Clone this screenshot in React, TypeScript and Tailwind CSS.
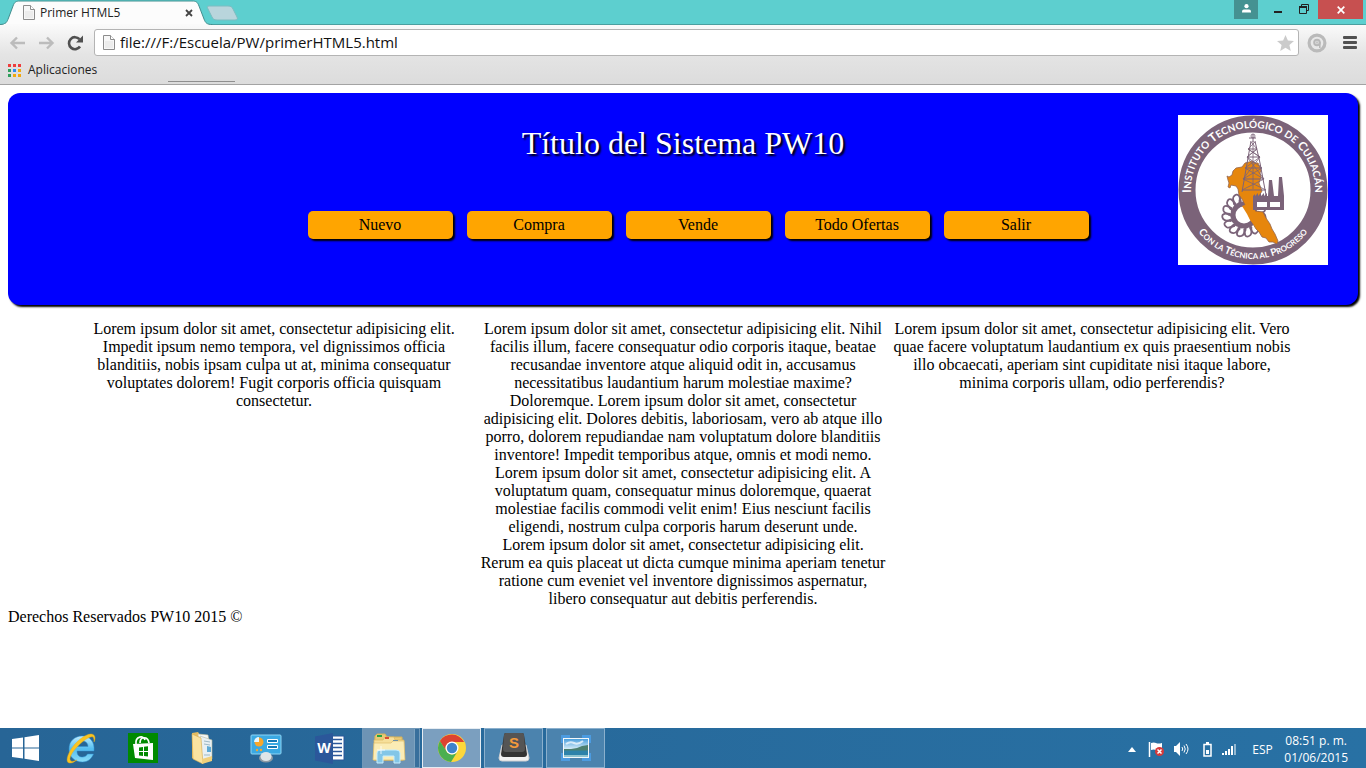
import React from 'react';

const ui = "font-['Open_Sans','Noto_Sans',sans-serif]";
const serif = "font-['Liberation_Serif','Times_New_Roman',serif]";

const PageIcon = () => (
  <svg width="12" height="15" viewBox="0 0 12 15" className="shrink-0" aria-hidden="true">
    <path d="M.5.5h7l4 4v10H.5z" fill="#f7f7f7" stroke="#8c8c8c" />
    <path d="M7.5.5v4h4" fill="#fff" stroke="#8c8c8c" />
    <path d="M2 6h8v7H2z" fill="#ececec" />
  </svg>
);

function TitleBar() {
  return (
    <div className="flex h-[25px] items-start justify-between bg-[#5dcfcf] shadow-[inset_0_-1px_0_#4a9f9f]">
      <div className="grid h-[25px] grid-cols-[240px]">
        <svg className="col-start-1 row-start-1" width="240" height="25" viewBox="0 0 240 25" aria-hidden="true">
          <path d="M0 24.5C6 24.5 7 22 8.500 18L13 6C14.500 2 16 1 20 1H192C196 1 197.500 2 199 6L204 19C205.500 23 207 24.500 212 24.500V26H0Z" fill="#fcfcfc" stroke="#438f8f" />
          <path d="M4 24.500h203" stroke="#fafafa" />
          <path d="M209 6h19c3 0 4 1 5 3l4 8c1 2 0 3-2 3h-18c-3 0-4-1-5-3l-4-8c-1-2-1-3 1-3z" fill="#b9d5dc" stroke="#7dbcc0" />
        </svg>
        <div className="col-start-1 row-start-1 flex h-[25px] items-center pr-[43px] pl-[23px]">
          <PageIcon />
          <span className="ml-[5px] flex-1 text-[12px] leading-4 text-[#222]">Primer HTML5</span>
          <button aria-label="Cerrar pestaña" className="grid h-4 w-4 place-items-center">
            <svg width="8" height="8" viewBox="0 0 8 8"><path d="M1 1l6 6M7 1L1 7" stroke="#444" strokeWidth="1.800" /></svg>
          </button>
        </div>
      </div>
      <div className="flex h-[19px] pr-[3px]">
        <button aria-label="Usuario" className="grid w-6 justify-center bg-[#459191] pt-1">
          <svg width="9" height="9" viewBox="0 0 9 9" fill="#fff"><circle cx="4.500" cy="2.200" r="2.100" /><path d="M0 8.500V7.500q0-2 2-2h5q2 0 2 2v1z" /></svg>
        </button>
        <button aria-label="Minimizar" className="grid w-10 place-items-center">
          <svg width="8" height="10" viewBox="0 0 8 10"><path d="M0 6h8v2H0z" fill="#222" /></svg>
        </button>
        <button aria-label="Restaurar" className="grid w-5 justify-start pt-1 pl-px">
          <svg width="10" height="10" viewBox="0 0 10 10" fill="none" stroke="#222"><path d="M2.500 2V.5h7v6H8M.5 3v6.500h7V3" /><path d="M0 3h8" strokeWidth="2" /></svg>
        </button>
        <button aria-label="Cerrar" className="grid w-[45px] place-items-center bg-[#c75050]">
          <svg width="8" height="8" viewBox="0 0 8 8"><path d="M.7.700l6.600 6.600M7.300.700L.7 7.300" stroke="#fff" strokeWidth="1.700" /></svg>
        </button>
      </div>
    </div>
  );
}

const appColors = ['#ee3d3d', '#ee3d3d', '#ee3d3d', '#2f9e5c', '#2f8cf0', '#f0a810', '#2f9e5c', '#f0a810', '#f0a810'];

function Toolbar() {
  return (
    <div className="flex h-[60px] flex-col border-b border-[#a3a3a3] bg-linear-to-b from-[#fafafa] via-[#e4e4e4] to-[#dcdcdc]">
      <div className="flex h-[35px] items-center px-[9px]">
        <button aria-label="Atrás">
          <svg width="17" height="14" viewBox="0 0 17 14" fill="none" stroke="#bcbcbc" strokeWidth="2.400"><path d="M8 1.500L2.500 7l5.500 5.500M2 7h14" /></svg>
        </button>
        <button aria-label="Adelante" className="ml-3">
          <svg width="17" height="14" viewBox="0 0 17 14" fill="none" stroke="#bcbcbc" strokeWidth="2.400"><path d="M9 1.500l5.500 5.500L9 12.500M15 7H1" /></svg>
        </button>
        <button aria-label="Recargar" className="ml-3">
          <svg width="17" height="16" viewBox="0 0 17 16"><path d="M13 11.500A6 6 0 1 1 12.500 4.200" fill="none" stroke="#505050" strokeWidth="2.600" /><path d="M16 .5v7H9z" fill="#505050" /></svg>
        </button>
        <label className="ml-2.5 flex h-[27px] flex-1 items-center rounded-[3px] border border-[#b4b4b4] bg-white pr-1 pl-2">
          <PageIcon />
          <input
            aria-label="Dirección"
            defaultValue="file:///F:/Escuela/PW/primerHTML5.html"
            className="ml-[5px] min-w-0 flex-1 bg-transparent pb-0.5 text-[15px] leading-5 text-[#111] outline-none"
          />
          <svg width="17" height="16" viewBox="0 0 17 16" fill="#cbcbcb" aria-hidden="true"><path d="M8.500 0l2.400 5.400 6.100.6-4.600 4 1.400 6-5.300-3.200L3.200 16l1.400-6L0 6l6.100-.6z" /></svg>
        </label>
        <button aria-label="Extensión" className="ml-2">
          <svg width="20" height="20" viewBox="0 0 20 20" fill="none"><circle cx="10" cy="10" r="7.900" fill="#e8e8e8" stroke="#bababa" strokeWidth="3.200" /><circle cx="10" cy="9.500" r="2.800" stroke="#b8b8b8" strokeWidth="2" /><circle cx="10" cy="9.500" r="1.200" fill="#c4c4c4" /><path d="M12.800 9v6" stroke="#b8b8b8" strokeWidth="1.600" /></svg>
        </button>
        <button aria-label="Menú" className="ml-4">
          <svg width="14" height="13" viewBox="0 0 14 13" fill="#505050"><rect width="14" height="3" rx="1" /><rect y="5" width="14" height="3" rx="1" /><rect y="10" width="14" height="3" rx="1" /></svg>
        </button>
      </div>
      <div className="flex flex-1 items-start pl-2">
        <a href="#aplicaciones" className="flex items-center gap-[7px] pt-0.5 text-[12px] leading-4 text-[#222]">
          <svg width="13" height="13" viewBox="0 0 13 13" aria-hidden="true">
            {appColors.map((c, i) => <rect key={i} x={(i % 3) * 5} y={Math.floor(i / 3) * 5} width="3" height="3" fill={c} />)}
          </svg>
          Aplicaciones
        </a>
        <div className="mb-0.5 ml-[71px] h-px w-[67px] self-end bg-[#8f8f8f]" />
      </div>
    </div>
  );
}

function Emblem() {
  const teeth = Array.from({ length: 15 }, (_, i) => i * 24);
  return (
    <svg width="150" height="150" viewBox="0 0 150 150" className="block bg-white" role="img" aria-label="Instituto Tecnológico de Culiacán">
      <defs>
        <path id="arcTop" d="M16 94A62 62 0 1 1 134 94" />
        <path id="arcBottom" d="M10 98A69 69 0 0 0 140 98" />
      </defs>
      <circle cx="75" cy="75" r="66" fill="#fff" stroke="#7b6379" strokeWidth="17" />
      <g fill="#fff" className="font-['Lato',sans-serif] font-bold">
        <text fontSize="12" textAnchor="middle">
          <textPath href="#arcTop" startOffset="50%">I<tspan fontSize="10">NSTITUTO</tspan> T<tspan fontSize="10">ECNOLÓGICO</tspan> <tspan fontSize="10">DE</tspan> C<tspan fontSize="10">ULIACÁN</tspan></textPath>
        </text>
        <text fontSize="10" textAnchor="middle">
          <textPath href="#arcBottom" startOffset="50%">C<tspan fontSize="8">ON LA</tspan> T<tspan fontSize="8">ÉCNICA AL</tspan> P<tspan fontSize="8">ROGRESO</tspan></textPath>
        </text>
      </g>
      <circle cx="66" cy="100" r="12.500" fill="#fff" stroke="#7b6379" strokeWidth="8" />
      {teeth.map((a) => (
        <path key={a} transform={`rotate(${a} 66 100)`} d="M63 87q-2-6 1-8q4-2 5 1q1 3-2 6" fill="#fff" stroke="#7b6379" strokeWidth="1.800" />
      ))}
      <path d="M49 61l2 1 3-2 1-4 3-3 6-1 3-4 4-1 3-1 3 2 3 0 2 4 1 3-1 3 1 4-2 6 3 8-6 10-1 10 8 1 3 6 4 6 2 5 3 5 3 7-1 3-4-2-4 0-3-4-4-1-3-5-3-3-3-5-3-6-4-5-1-8-3-6-3-4-1-6-2-3-5-1-1 3-2-1 1-4-1-3z" fill="#e6860d" stroke="#96664d" strokeWidth=".8" />
      <circle cx="67" cy="100" r="7.500" fill="#fff" />
      <path d="M64 91l5 8 3 6 5 6 6-3-6-12-4-8z" fill="#e6860d" />
      <g fill="none" stroke="#7b6379">
        <path strokeWidth="1" d="M73 26L64 77M77 26l5 22 6 32M75 19v8M71 23h7M70 34h9M69 42h13M67 53h17M65 64h21M64 75h24" />
        <path strokeWidth=".8" d="M73 27l6 7-10 8 15 11-19 11 23 11M77 27l-7 7 12 8-15 11 19 11-22 11M70 34l12 8M79 34l-10 8M75 26v48M69 42l17 22M82 42L65 64" />
        <circle cx="75" cy="21" r="2" strokeWidth=".8" />
      </g>
      <path d="M75 84v-3l2-2v2l3-3v3l3-3v3l3-3v3l3-3v3h1l1-16h3l2 16h4l1-19h3l2 19v14H75z" fill="#7b6379" />
      <path d="M79 87h10v5H79zM92 87h10v5H92z" fill="#fff" />
    </svg>
  );
}

const links = ['Nuevo', 'Compra', 'Vende', 'Todo Ofertas', 'Salir'];

function Page() {
  return (
    <main className={`flex-1 bg-white p-2 text-[16px] leading-[18px] text-black ${serif}`}>
      <header className="grid min-h-[212px] grid-cols-[180px_1fr_180px] rounded-xl bg-[#0000ff] shadow-[2px_2px_2px_#000]">
        <div className="col-start-2">
          <h1 className="pt-8 text-center text-[32px] leading-9 text-white [text-shadow:2px_2px_2px_#000]">Título del Sistema PW10</h1>
          <nav className="mt-[50px] flex justify-center gap-3.5 pl-[30px]">
            {links.map((l) => (
              <a key={l} href="#menu" className="h-7 w-[145px] rounded-[5px] bg-[#ffa500] pt-[5px] text-center shadow-[2px_2px_2px_#000]">{l}</a>
            ))}
          </nav>
        </div>
        <div className="pt-[22px]"><Emblem /></div>
      </header>
      <section className="grid grid-cols-[30%_30%_30%] justify-center gap-1 pt-[15px] text-center">
        <p>Lorem ipsum dolor sit amet, consectetur adipisicing elit. Impedit ipsum nemo tempora, vel dignissimos officia blanditiis, nobis ipsam culpa ut at, minima consequatur voluptates dolorem! Fugit corporis officia quisquam consectetur.</p>
        <div>
          <p>Lorem ipsum dolor sit amet, consectetur adipisicing elit. Nihil facilis illum, facere consequatur odio corporis itaque, beatae recusandae inventore atque aliquid odit in, accusamus necessitatibus laudantium harum molestiae maxime? Doloremque. Lorem ipsum dolor sit amet, consectetur adipisicing elit. Dolores debitis, laboriosam, vero ab atque illo porro, dolorem repudiandae nam voluptatum dolore blanditiis inventore! Impedit temporibus atque, omnis et modi nemo. Lorem ipsum dolor sit amet, consectetur adipisicing elit. A voluptatum quam, consequatur minus doloremque, quaerat molestiae facilis commodi velit enim! Eius nesciunt facilis eligendi, nostrum culpa corporis harum deserunt unde.</p>
          <p>Lorem ipsum dolor sit amet, consectetur adipisicing elit. Rerum ea quis placeat ut dicta cumque minima aperiam tenetur ratione cum eveniet vel inventore dignissimos aspernatur, libero consequatur aut debitis perferendis.</p>
        </div>
        <p>Lorem ipsum dolor sit amet, consectetur adipisicing elit. Vero quae facere voluptatum laudantium ex quis praesentium nobis illo obcaecati, aperiam sint cupiditate nisi itaque labore, minima corporis ullam, odio perferendis?</p>
      </section>
      <footer>Derechos Reservados PW10 2015 ©</footer>
    </main>
  );
}

const WindowsLogo = () => (
  <svg width="27" height="26" viewBox="0 0 27 26" fill="#fff"><path d="M0 4l11-1.500v10H0zM12.500 2.200L27 0v12.500H12.500zM0 13.500h11v10L0 22zM12.500 13.500H27V26l-14.500-2.200z" /></svg>
);

const IeLogo = () => (
  <svg width="30" height="31" viewBox="0 0 30 31">
    <defs><linearGradient id="ie" x2="0" y2="1"><stop stopColor="#c0edff" /><stop offset=".5" stopColor="#53bdf0" /><stop offset="1" stopColor="#8adcf8" /></linearGradient></defs>
    <path fill="url(#ie)" stroke="#2c8fd0" strokeWidth=".5" fillRule="evenodd" d="M16 3c8 0 13 6 12 15H11c0 4 2 6 5.500 6 2 0 4-1 5-3h6c-2 5-6 8-11 8C9 29 3 24 3 16S9 3 16 3zM11 13.500h11c0-3-2-5.500-5.500-5.500S11 10.500 11 13.500z" />
    <path d="M28 9c2-4 1-8-3-8C19 1 9 9 4 18c-4 7-4 13 1 12 2 0 4-2 6-3-3 1-5 2-6 1-3-2 1-9 7-15C18 7 24 3 27 4c1 1 1 3 1 5z" fill="#fac421" stroke="#e6a815" strokeWidth=".4" />
  </svg>
);

const StoreLogo = () => (
  <svg width="30" height="30" viewBox="0 0 30 30">
    <path fill="#008a00" d="M0 0h30v30H0z" />
    <path d="M8 11c-1-8 8-9 9-4M12 10c0-7 8-7 9 0" fill="none" stroke="#fff" strokeWidth="1.700" />
    <path d="M5 11l20-1v17L7 25z" fill="#fff" />
    <path d="M11 14.500l4-.5v4h-4zM16 13.800l4-.6v4.800h-4zM11 19h4v4l-4-.5zM16 19h4v4.500l-4-.6z" fill="#008a00" />
  </svg>
);

const FolderLogo = () => (
  <svg width="26" height="32" viewBox="0 0 26 32">
    <path d="M2 1l6-1 2 3v27l-8-4z" fill="#e5bd62" /><path d="M8 2l10 1 3 22-10 4z" fill="#f5f6f4" stroke="#cfc7a3" strokeWidth=".6" />
    <path d="M10 4l12 4v19l-10 1z" fill="#e8f0f3" stroke="#b6b8a0" strokeWidth=".6" /><path d="M14 9l6 1M14 12l6 1M14 23h6" stroke="#9fb9c5" /><path d="M17 14l4 1v5h-4z" fill="#5eaad5" />
    <path d="M2 2l9 4 2 26-10-5z" fill="#fae3a0" stroke="#d6ab4d" strokeWidth=".6" /><path d="M12 27l10-3v5l-10 3z" fill="#f0cf7b" />
  </svg>
);

const PanelLogo = () => (
  <svg width="32" height="30" viewBox="0 0 32 30">
    <rect x="1" y="2" width="30" height="19" rx="1" fill="#3ba9e2" stroke="#8ed5f5" />
    <circle cx="9" cy="9" r="4.500" fill="#f9a72b" /><path d="M9 9V4a5 5 0 0 0-5 5z" fill="#e6f6ff" />
    <path d="M17.500 6.500h10v3h-10zM17.500 12.500h10v3h-10z" fill="#157ab8" stroke="#fff" /><circle cx="7" cy="17" r="1.200" fill="#f9a72b" /><circle cx="11" cy="17" r="1.200" fill="#f9a72b" />
    <ellipse cx="16" cy="25" rx="7" ry="4.500" fill="#8e9aa3" /><ellipse cx="16" cy="23.500" rx="5.500" ry="4.500" fill="#dfe5e8" />
  </svg>
);

const WordLogo = () => (
  <svg width="30" height="31" viewBox="0 0 30 31">
    <path d="M17 3h12v24H17z" fill="#fff" stroke="#2b579a" /><path d="M18 6.500h9M18 10.500h9M18 14.500h9M18 18.500h9M18 22.500h9" stroke="#2b579a" strokeWidth="1.500" />
    <path d="M0 3.500L18 0v31L0 27.500z" fill="#2b579a" /><text x="9" y="20" fontSize="14" fontWeight="700" textAnchor="middle" fill="#fff" className="font-['Open_Sans',sans-serif]">W</text>
  </svg>
);

const ExplorerLogo = () => (
  <svg width="34" height="31" viewBox="0 0 34 31">
    <path d="M3 3l2-2h8l2 3h15l1 23H2z" fill="#e9c976" stroke="#d6b257" /><path d="M5 2h5v2H5z" fill="#25a342" />
    <path d="M2 7h9l2-3h9l1 3h9v20H2z" fill="#f6df9a" stroke="#d9b660" strokeWidth=".7" /><path d="M13 4h4v2h-4z" fill="#dc4b30" /><path d="M21 7h5v2h-5z" fill="#3478c6" />
    <path d="M2 10h17l2-2h11l1 19H1z" fill="#fbecb5" stroke="#dfbf6c" strokeWidth=".7" />
    <path d="M5 30V20q0-3 4-3h15q4 0 4 3v10h-6v-7H11v7z" fill="#83c6e7" stroke="#c8eefd" />
    <path d="M9 13v8M5 17h8" stroke="#fff" opacity=".8" />
  </svg>
);

const ChromeLogo = () => (
  <svg width="30" height="30" viewBox="0 0 30 30">
    <circle cx="15" cy="15" r="14" fill="#fdd73b" />
    <path d="M2.900 8A14 14 0 0 1 27.100 9H15a6.500 6.500 0 0 0-6 9z" fill="#dd4330" />
    <path d="M2.900 8A14 14 0 0 0 14 29l6.500-10.500A6.500 6.500 0 0 1 9 17.500z" fill="#4caf50" />
    <circle cx="15" cy="15" r="6.500" fill="#fff" /><circle cx="15" cy="15" r="5.200" fill="#3f83cc" />
  </svg>
);

const SublimeLogo = () => (
  <svg width="32" height="30" viewBox="0 0 32 30">
    <path d="M4 12h24l3 13q0 3-3 3H4q-3 0-3-3z" fill="#f2f2f2" stroke="#d0d0d0" />
    <path d="M6 2q0-2 2-2h16q2 0 2 2l3 19q0 3-3 3H6q-3 0-3-3z" fill="#333" /><path d="M6 2q0-2 2-2h16q2 0 2 2l1 14q0 3-3 3H8q-3 0-3-3z" fill="#555" />
    <text x="16" y="15" fontSize="15" fontWeight="700" textAnchor="middle" fill="#f59a3b" className="font-['Liberation_Sans',sans-serif]">S</text>
  </svg>
);

const PhotoLogo = () => (
  <svg width="30" height="26" viewBox="0 0 30 26">
    <defs><linearGradient id="sky" x2="0" y2="1"><stop stopColor="#4a9fdc" /><stop offset="1" stopColor="#e3f4fb" /></linearGradient></defs>
    <path d="M1.500 8V1.500H9M21 1.500h7.500V8M28.500 18v6.500H21M9 24.500H1.500V18" fill="none" stroke="#4c9be0" strokeWidth="3" />
    <path d="M2 3h26v20H2z" fill="#f4f8fa" /><path d="M3 4h24v11H3z" fill="url(#sky)" /><path d="M3 14h7l6-1 5-2 6-1v6H3z" fill="#4c8070" /><path d="M3 15.500h24V22H3z" fill="#2d82aa" /><path d="M3 20h24v2H3z" fill="#8fc3cf" />
    <path d="M5 9q4-3 8-1t9-2" fill="none" stroke="#fff" strokeWidth="2" opacity=".7" />
  </svg>
);

const pinned = [
  { n: 'Inicio', I: WindowsLogo, c: 'w-[50px]' },
  { n: 'Internet Explorer', I: IeLogo, c: 'w-[62px]' },
  { n: 'Tienda', I: StoreLogo, c: 'w-[62px]' },
  { n: 'Documentos', I: FolderLogo, c: 'w-[58px]' },
  { n: 'Panel de control', I: PanelLogo, c: 'w-[68px]' },
  { n: 'Word', I: WordLogo, c: 'w-[60px]' },
];

const openApps = [
  { n: 'Google Chrome', I: ChromeLogo, c: 'w-[59px] border-white/80 bg-[#7b9fbf]' },
  { n: 'Sublime Text', I: SublimeLogo, c: 'w-[59px] border-[#8bb0cd] bg-[#4b83ae]' },
  { n: 'Fotos', I: PhotoLogo, c: 'w-[59px] border-[#8bb0cd] bg-[#4b83ae]' },
];

function Taskbar() {
  return (
    <div className="flex h-10 items-stretch justify-between bg-linear-to-r from-[#276596] to-[#2871a4] text-white">
      <div className="flex">
        {pinned.map(({ n, I, c }) => <button key={n} aria-label={n} className={`grid place-items-center ${c}`}><I /></button>)}
        <div className="ml-0.5 flex border border-[#7198b8] bg-[#6d94b5]">
          <button aria-label="Explorador" className="grid w-[51px] place-items-center"><ExplorerLogo /></button>
          <div className="w-[5px] border-l border-[#7ea3c0] bg-[#386f9c]" />
        </div>
        <div className="ml-[2px] flex gap-[3px]">
          {openApps.map(({ n, I, c }) => <button key={n} aria-label={n} className={`grid place-items-center border ${c}`}><I /></button>)}
        </div>
      </div>
      <div className="flex items-center pr-[18px] pt-0.5 text-[12px] leading-[17px]">
        <button aria-label="Mostrar iconos ocultos"><svg width="8" height="5" viewBox="0 0 8 5"><path d="M4 0l4 5H0z" fill="#fff" /></svg></button>
        <svg className="ml-3" width="17" height="16" viewBox="0 0 17 16" aria-hidden="true"><path d="M1.500 1v15" stroke="#fff" strokeWidth="1.500" /><path d="M3 2q3-1 5 0t6 0v7H8q-2-1-5 0z" fill="#fff" /><circle cx="11.500" cy="10.500" r="4.500" fill="#d63a3a" /><path d="M9.500 8.500l4 4M13.500 8.500l-4 4" stroke="#fff" strokeWidth="1.500" /></svg>
        <svg className="ml-2" width="16" height="14" viewBox="0 0 16 14" aria-hidden="true"><path d="M1 4h2l4-4v14l-4-4H1z" fill="#fff" /><path d="M9 5q1.500 2 0 4M11 3.500q2.500 3.500 0 7M13 2q4 5 0 10" fill="none" stroke="#fff" /></svg>
        <svg className="ml-3.5" width="9" height="15" viewBox="0 0 9 15" aria-hidden="true"><path d="M1 2.500h7V14H1z" fill="none" stroke="#fff" strokeWidth="1.500" /><path d="M3 0h3v2H3zM3 8h3v4H3z" fill="#fff" /></svg>
        <svg className="ml-2.5" width="16" height="13" viewBox="0 0 16 13" aria-hidden="true" fill="#fff"><path d="M0 10h2v2H0zM3 8h2v4H3zM6 6h2v6H6zM9 3h2v9H9z" /><path d="M12 1h2v11h-2z" opacity=".5" /></svg>
        <span className="ml-3.5 w-5">ESP</span>
        <div className="ml-3 text-center"><div>08:51 p. m.</div><div>01/06/2015</div></div>
      </div>
    </div>
  );
}

export default function App() {
  return (
    <div className={`flex min-h-screen flex-col ${ui}`}>
      <TitleBar />
      <Toolbar />
      <Page />
      <Taskbar />
    </div>
  );
}
